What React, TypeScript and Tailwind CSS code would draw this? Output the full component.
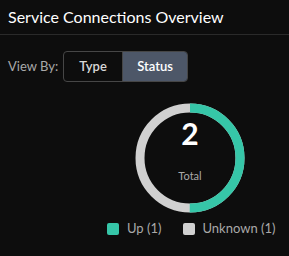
import React from "react";

export default function App() {
  const r = 50;
  const c = 2 * Math.PI * r;
  return (
    <div className="w-[289px] h-[256px] bg-[#0d0d0d] overflow-hidden" style={{ fontFamily: "Lato, 'Noto Sans', sans-serif" }}>
      <div className="h-[35px] border-b border-[#2a2a2a] pl-[8px] flex items-center">
        <span className="text-[16px] text-white leading-none">Service Connections Overview</span>
      </div>
      <div className="flex items-center mt-[16px] pl-[8px]">
        <span className="text-[13px] text-[#a9a9a9] w-[55px]">View By:</span>
        <div className="flex h-[31px] border border-[#464646] rounded-[4px] overflow-hidden">
          <button className="w-[58px] text-[13px] font-semibold text-[#d8d8d8]">Type</button>
          <button className="w-[65px] text-[13px] font-semibold text-white bg-[#4d5768] border-l border-[#464646]">Status</button>
        </div>
      </div>
      <div className="flex justify-center pl-[91px] mt-[21px]">
        <div className="relative w-[110px] h-[110px]">
          <svg width="110" height="110" viewBox="0 0 110 110">
            <circle cx="55" cy="55" r={r} fill="none" stroke="#d0d0d0" strokeWidth="9" />
            <circle
              cx="55"
              cy="55"
              r={r}
              fill="none"
              stroke="#36c6a8"
              strokeWidth="9"
              strokeDasharray={`${c / 2} ${c}`}
              transform="rotate(-90 55 55)"
            />
          </svg>
          <div className="absolute inset-0 flex flex-col items-center">
            <span className="text-[30px] font-bold text-white leading-none mt-[15px]">2</span>
            <span className="text-[11px] text-[#a9a9a9] mt-[20px]">Total</span>
          </div>
        </div>
      </div>
      <div className="flex items-center pl-[107px] mt-[6px] text-[13px] text-[#a9a9a9]">
        <span className="w-[12px] h-[12px] rounded-[2px] bg-[#36c6a8]" />
        <span className="ml-[8px]">Up (1)</span>
        <span className="w-[12px] h-[12px] rounded-[2px] bg-[#d0d0d0] ml-[22px]" />
        <span className="ml-[7px]">Unknown (1)</span>
      </div>
    </div>
  );
}
